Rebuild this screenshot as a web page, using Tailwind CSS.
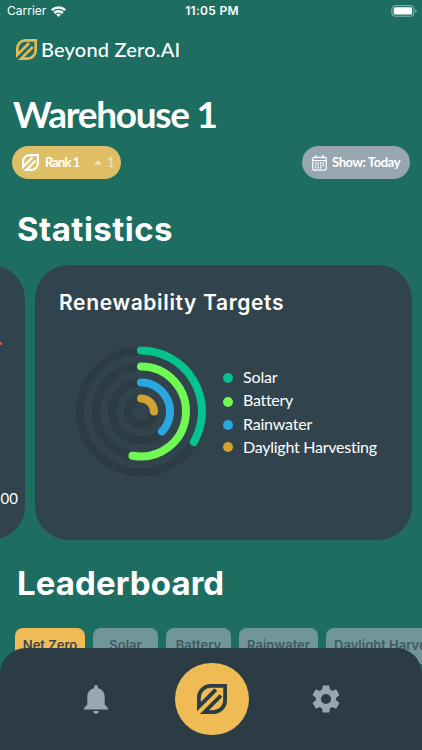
<!DOCTYPE html>
<html lang="en">
<head>
    <meta charset="UTF-8">
    <meta name="viewport" content="width=device-width, initial-scale=1.0">
    <title>Beyond Zero.AI</title>
    <script src="https://cdn.jsdelivr.net/npm/@tailwindcss/browser@4"></script>
</head>
<body class="bg-[#1d6e61] text-white font-['Lato',sans-serif]">
    <!-- Leaf logo, shared by the header, rank pill and nav button -->
    <svg class="hidden">
        <symbol id="leaf" viewBox="0 0 30 30">
            <path d="M18.8 5.7L1.9 22.6V13.7A11.8 11.8 0 0 1 13.7 1.9H28.1V16.3A11.8 11.8 0 0 1 16.3 28.1H7.4L24 11.5" fill="none" stroke="currentColor" stroke-width="3.8"/>
        </symbol>
    </svg>

    <div class="relative w-[422px] h-[750px] overflow-hidden">
        <!-- Status bar -->
        <div class="h-[22px] grid grid-cols-3 items-center pl-[7px] pr-[5px] text-[12px] leading-none font-['Inter',sans-serif]">
            <div class="flex items-center gap-[5px]">
                <span>Carrier</span>
                <svg class="w-[15px] h-[11px]" viewBox="0 0 15 11" fill="none" stroke="currentColor" stroke-width="2.5">
                    <path d="M.8 4.2A9.6 9.6 0 0 1 14.2 4.2M3.2 7A6.2 6.2 0 0 1 11.8 7"/>
                    <path d="M7.5 11L5.1 8.6A3.4 3.4 0 0 1 9.9 8.6Z" fill="currentColor" stroke="none"/>
                </svg>
            </div>
            <span class="text-center font-semibold tracking-[0.3px]">11:05 PM</span>
            <svg class="justify-self-end w-[26px] h-[12px]" viewBox="0 0 26 12">
                <rect x=".9" y=".6" width="22" height="10.6" rx="3" fill="none" stroke="#fff" stroke-opacity=".5"/>
                <rect x="2.7" y="2.2" width="18.4" height="7.4" rx="1.4" fill="#fff"/>
                <path d="M24.3 4.3Q25.6 5 25.6 6T24.3 7.7Z" fill="#fff" fill-opacity=".5"/>
            </svg>
        </div>

        <!-- Brand -->
        <div class="flex items-center h-[22px] mt-[16px] pl-[16px] gap-[4px]">
            <svg class="w-[21px] h-[21px] text-[#e5b955]"><use href="#leaf"/></svg>
            <span class="text-[20px] leading-[22px] font-medium tracking-[0.2px]">Beyond Zero.AI</span>
        </div>

        <h1 class="mt-[31px] pl-[13px] h-[46px] text-[37px] leading-[46px] font-bold tracking-[-1.3px] whitespace-nowrap">Warehouse 1</h1>

        <div class="mt-[9px] flex justify-between pl-[12px] pr-[12px]">
            <div class="flex items-center w-[109px] h-[33px] rounded-full bg-[#debf66] pl-[10px] text-[13px]">
                <svg class="w-[17px] h-[17px]"><use href="#leaf"/></svg>
                <span class="ml-[6px] w-[49px] font-bold tracking-[-0.9px]">Rank 1</span>
                <svg class="w-[8px] h-[5px] text-white/60" viewBox="0 0 8 5" fill="currentColor"><path d="M0 4.5L4 .5L8 4.5Z"/></svg>
                <span class="ml-[5px] text-white/60">1</span>
            </div>
            <div class="flex items-center w-[108px] h-[33px] rounded-full bg-[#97a6af] pl-[10px] text-[13px]">
                <svg class="w-[15px] h-[16px]" viewBox="0 0 15 16" fill="none" stroke="currentColor">
                    <rect x=".8" y="2.3" width="13.4" height="12.9" rx="1.5" stroke-width="1.2"/>
                    <path d="M1 5.6H14" stroke-width="1.2"/>
                    <path d="M4 .3V3.5M11 .3V3.5" stroke-width="1.5"/>
                    <path d="M3 8.2H12M3 10.5H12M3 12.8H9.5" stroke-width="1.4" stroke-dasharray="1.5 1"/>
                </svg>
                <span class="ml-[5px] font-bold tracking-[-0.4px] whitespace-nowrap">Show: Today</span>
            </div>
        </div>

        <h2 class="mt-[30px] pl-[17px] h-[40px] text-[33px] leading-[40px] font-bold tracking-[0.45px] font-['Inter',sans-serif]">Statistics</h2>

        <!-- Carousel, previous card peeks in from the left -->
        <div class="mt-[16px] flex gap-[10px] h-[275px] -ml-[352px] w-max">
            <div class="relative w-[377px] rounded-[34px] bg-[#31444d]">
                <span class="absolute right-[23px] top-[77px] w-[4px] h-[3px] rounded-full bg-[#e25a4e]"></span>
                <span class="absolute right-[7px] top-[224px] text-[15px] leading-[18px]">00</span>
            </div>
            <div class="w-[377px] rounded-[34px] bg-[#31444d] pt-[24px]">
                <h3 class="pl-[24px] h-[27px] text-[21px] leading-[27px] font-semibold tracking-[0.65px] font-['Inter',sans-serif]">Renewability Targets</h3>
                <div class="flex items-start mt-[27px] pl-[38px]">
                    <svg class="w-[136px] h-[136px]" viewBox="0 0 136 136" fill="none" stroke-width="8" stroke-linecap="round">
                        <g stroke="#2b3c44">
                            <circle cx="68" cy="68.5" r="61"/>
                            <circle cx="68" cy="68.5" r="45"/>
                            <circle cx="68" cy="68.5" r="29"/>
                            <circle cx="68" cy="68.5" r="13"/>
                        </g>
                        <path stroke="#04c38d" d="M68 7.5A61 61 0 0 1 120.8 99"/>
                        <path stroke="#70f953" d="M68 23.5A45 45 0 1 1 59.5 112.7"/>
                        <path stroke="#2aa6e1" d="M68 39.5A29 29 0 0 1 89 88.5"/>
                        <path stroke="#d4a231" d="M68 55.5A13 13 0 0 1 81 68.5"/>
                    </svg>
                    <ul class="mt-[22px] ml-[14px] text-[16px] leading-[23.4px] whitespace-nowrap">
                        <li class="flex items-center gap-[10px]"><span class="mt-[3px] w-[10px] h-[10px] rounded-full bg-[#04c38d]"></span><span class="tracking-[-0.15px]">Solar</span></li>
                        <li class="flex items-center gap-[10px]"><span class="mt-[3px] w-[10px] h-[10px] rounded-full bg-[#70f953]"></span><span class="tracking-[-0.3px]">Battery</span></li>
                        <li class="flex items-center gap-[10px]"><span class="mt-[3px] w-[10px] h-[10px] rounded-full bg-[#2aa6e1]"></span><span class="tracking-[-0.2px]">Rainwater</span></li>
                        <li class="flex items-center gap-[10px]"><span class="w-[10px] h-[10px] rounded-full bg-[#d4a231]"></span><span class="tracking-[-0.25px]">Daylight Harvesting</span></li>
                    </ul>
                </div>
            </div>
        </div>

        <h2 class="mt-[23px] pl-[17px] h-[40px] text-[33px] leading-[40px] font-bold tracking-[0.1px] font-['Inter',sans-serif]">Leaderboard</h2>

        <!-- Category tabs -->
        <div class="mt-[25px] ml-[15px] flex gap-[8px] w-max text-[13px] font-semibold text-[#3f5a5e] font-['Inter',sans-serif]">
            <span class="flex items-center justify-center w-[70px] h-[36px] rounded-[8px] bg-[#eebb55] text-[#38474c]">Net Zero</span>
            <span class="flex items-center justify-center w-[65px] h-[36px] rounded-[8px] bg-[#719698]">Solar</span>
            <span class="flex items-center justify-center w-[65px] h-[36px] rounded-[8px] bg-[#719698]">Battery</span>
            <span class="flex items-center justify-center w-[79px] h-[36px] rounded-[8px] bg-[#719698]">Rainwater</span>
            <span class="flex items-center pl-[8px] w-[146px] h-[36px] rounded-[8px] bg-[#719698]">Daylight Harvesting</span>
        </div>

        <!-- Bottom nav -->
        <nav class="absolute inset-x-0 bottom-0 h-[102px] rounded-t-[26px] bg-[#2b3c44] flex items-center pl-[84px] text-[#96a7b0]">
            <svg class="w-[24px] h-[29px]" viewBox="0 0 24 29" fill="currentColor">
                <path d="M12 0A2 2 0 0 0 10 2V3.2C6 4.1 3.3 7.5 3.3 11.7V19.5L0 23V24.6H24V23L20.7 19.5V11.7C20.7 7.5 18 4.1 14 3.2V2A2 2 0 0 0 12 0ZM9.2 26A2.8 2.8 0 0 0 14.8 26Z"/>
            </svg>
            <div class="ml-[67px] flex items-center justify-center w-[74px] h-[72px] rounded-full bg-[#eebb55] text-[#2b3c44]">
                <svg class="w-[30px] h-[30px]"><use href="#leaf"/></svg>
            </div>
            <svg class="ml-[60px] w-[34px] h-[34px]" viewBox="0 0 24 24" fill="currentColor">
                <path d="M19.14 12.94c.04-.3.06-.61.06-.94 0-.32-.02-.64-.07-.94l2.03-1.58a.49.49 0 0 0 .12-.61l-1.92-3.32a.49.49 0 0 0-.59-.22l-2.39.96c-.5-.38-1.03-.7-1.62-.94l-.36-2.54a.48.48 0 0 0-.48-.41h-3.84a.48.48 0 0 0-.47.41l-.36 2.54c-.59.24-1.13.57-1.62.94l-2.39-.96a.48.48 0 0 0-.59.22L2.74 8.87a.47.47 0 0 0 .12.61l2.03 1.58c-.05.3-.09.63-.09.94s.02.64.07.94l-2.03 1.58a.49.49 0 0 0-.12.61l1.92 3.32c.12.22.37.29.59.22l2.39-.96c.5.38 1.03.7 1.62.94l.36 2.54c.05.24.24.41.48.41h3.84c.24 0 .44-.17.47-.41l.36-2.54c.59-.24 1.13-.56 1.62-.94l2.39.96c.22.08.47 0 .59-.22l1.92-3.32a.47.47 0 0 0-.12-.61l-2.01-1.58zM12 15.6A3.6 3.6 0 1 1 12 8.4a3.6 3.6 0 0 1 0 7.2z"/>
            </svg>
        </nav>
    </div>
</body>
</html>
